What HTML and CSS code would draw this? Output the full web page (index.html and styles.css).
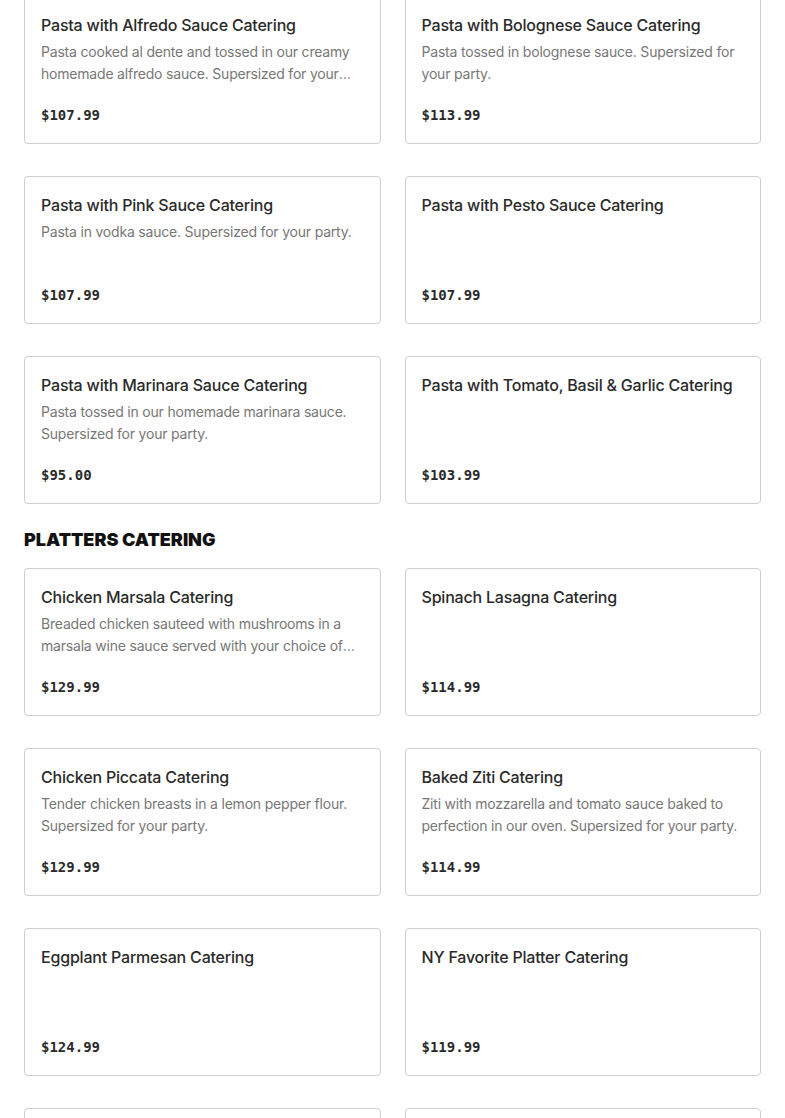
FILE: index.html
```html
<!DOCTYPE html>
<html lang="en">
<head>
    <meta charset="UTF-8">
    <meta name="viewport" content="width=device-width, initial-scale=1.0">
    <title>Catering Menu</title>
    <link rel="stylesheet" href="styles.css">
</head>
<body>

<div class="menu">

    <!-- pasta section (scrolled past its heading) -->
    <div class="grid">
        <div class="card">
            <h3>Pasta with Alfredo Sauce Catering</h3>
            <p class="desc">Pasta cooked al dente and tossed in our creamy homemade alfredo sauce. Supersized for your party.</p>
            <div class="price">$107.99</div>
        </div>
        <div class="card">
            <h3>Pasta with Bolognese Sauce Catering</h3>
            <p class="desc">Pasta tossed in bolognese sauce. Supersized for your party.</p>
            <div class="price">$113.99</div>
        </div>
        <div class="card">
            <h3>Pasta with Pink Sauce Catering</h3>
            <p class="desc">Pasta in vodka sauce. Supersized for your party.</p>
            <div class="price">$107.99</div>
        </div>
        <div class="card">
            <h3>Pasta with Pesto Sauce Catering</h3>
            <p class="desc"></p>
            <div class="price">$107.99</div>
        </div>
        <div class="card">
            <h3>Pasta with Marinara Sauce Catering</h3>
            <p class="desc">Pasta tossed in our homemade marinara sauce. Supersized for your party.</p>
            <div class="price">$95.00</div>
        </div>
        <div class="card">
            <h3>Pasta with Tomato, Basil &amp; Garlic Catering</h3>
            <p class="desc"></p>
            <div class="price">$103.99</div>
        </div>
    </div>

    <h2 class="section-title">Platters Catering</h2>

    <div class="grid">
        <div class="card">
            <h3>Chicken Marsala Catering</h3>
            <p class="desc">Breaded chicken sauteed with mushrooms in a marsala wine sauce served with your choice of pasta. Supersized for your party.</p>
            <div class="price">$129.99</div>
        </div>
        <div class="card">
            <h3>Spinach Lasagna Catering</h3>
            <p class="desc"></p>
            <div class="price">$114.99</div>
        </div>
        <div class="card">
            <h3>Chicken Piccata Catering</h3>
            <p class="desc">Tender chicken breasts in a lemon pepper flour. Supersized for your party.</p>
            <div class="price">$129.99</div>
        </div>
        <div class="card">
            <h3>Baked Ziti Catering</h3>
            <p class="desc">Ziti with mozzarella and tomato sauce baked to perfection in our oven. Supersized for your party.</p>
            <div class="price">$114.99</div>
        </div>
        <div class="card">
            <h3>Eggplant Parmesan Catering</h3>
            <p class="desc"></p>
            <div class="price">$124.99</div>
        </div>
        <div class="card">
            <h3>NY Favorite Platter Catering</h3>
            <p class="desc"></p>
            <div class="price">$119.99</div>
        </div>
        <div class="card">
            <h3>Chicken Parmesan Catering</h3>
            <p class="desc"></p>
            <div class="price">$129.99</div>
        </div>
        <div class="card">
            <h3>Meatball Platter Catering</h3>
            <p class="desc"></p>
            <div class="price">$114.99</div>
        </div>
    </div>

</div>

</body>
</html>
```

FILE: styles.css
```css
body {
    font-family: Inter, "Liberation Sans", sans-serif;
    margin: 0;
    padding: 0;
    background-color: #fff;
    color: #2a2a2a;
}

.menu {
    padding: 0 24px;
    margin-top: -4px;
}

.grid {
    display: grid;
    grid-template-columns: 1fr 1fr;
    column-gap: 24px;
    row-gap: 32px;
}

.card {
    border: 1px solid #cfcfcf;
    border-radius: 4px;
    padding: 16px;
}

.card h3 {
    margin: 0;
    font-size: 16px;
    font-weight: 500;
    line-height: 24px;
    letter-spacing: -0.2px;
    color: #2a2a2a;
}

.desc {
    margin: 4px 0 0;
    font-size: 14px;
    line-height: 22px;
    letter-spacing: -0.2px;
    height: 44px;
    color: #777;
    display: -webkit-box;
    -webkit-line-clamp: 2;
    -webkit-box-orient: vertical;
    overflow: hidden;
}

.price {
    margin-top: 18px;
    font-family: "DejaVu Sans Mono", "Liberation Mono", monospace;
    font-weight: bold;
    font-size: 14px;
    line-height: 24px;
    color: #2a2a2a;
}

.section-title {
    margin: 0;
    padding: 24px 0 16px;
    font-size: 18px;
    font-weight: 900;
    line-height: 24px;
    text-transform: uppercase;
    color: #111;
}
```
